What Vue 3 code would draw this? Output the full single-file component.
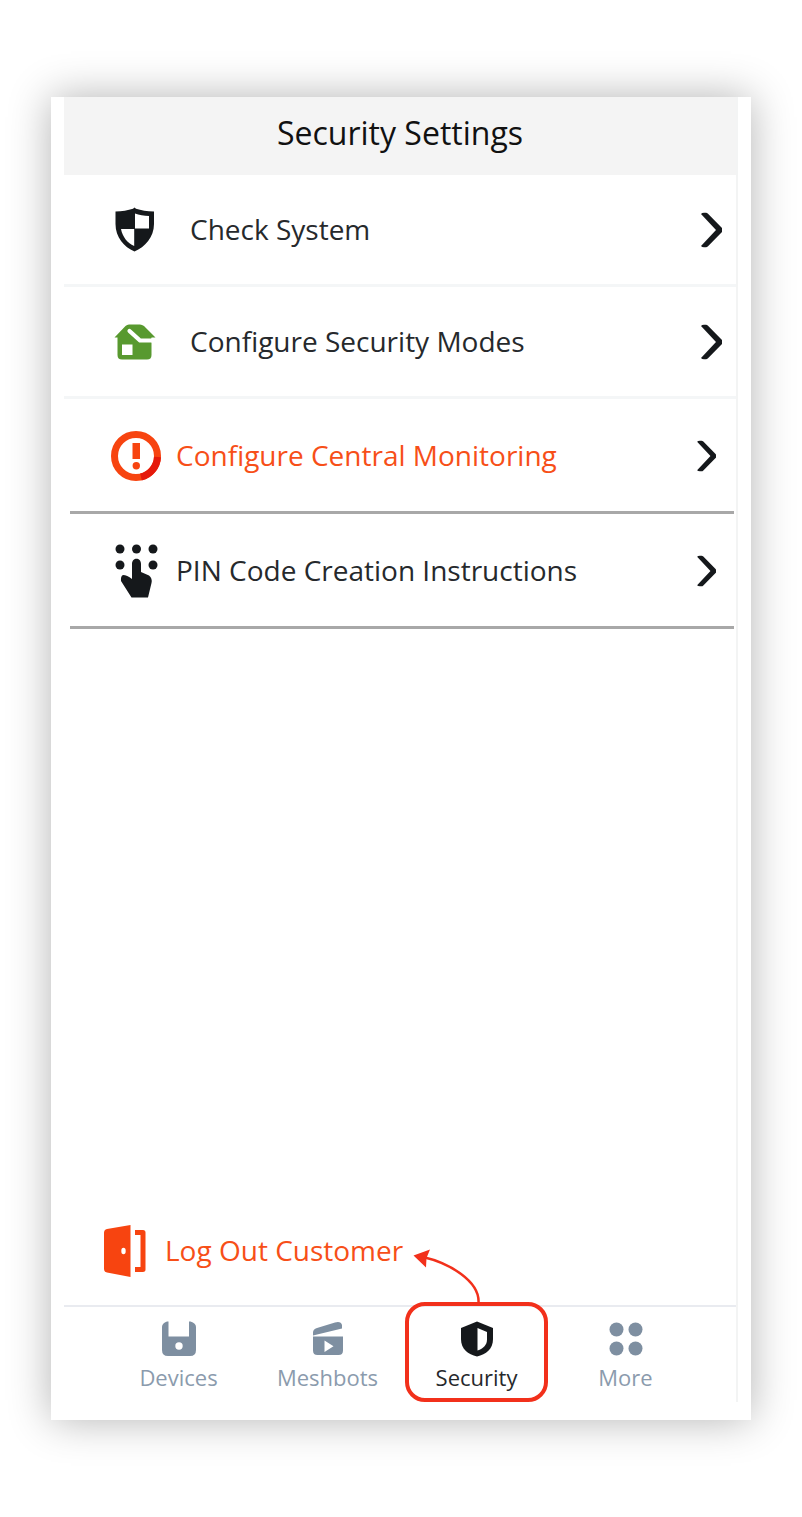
<script setup>
const modes = [
  { label: 'Check System', icon: 'shield' },
  { label: 'Configure Security Modes', icon: 'house' },
]
const services = [
  { label: 'Configure Central Monitoring', icon: 'alert', accent: true },
  { label: 'PIN Code Creation Instructions', icon: 'keypad' },
]
const tabs = ['Devices', 'Meshbots', 'Security', 'More']
</script>

<template>
  <div class="page">
    <div class="card">
      <main class="screen">
        <header class="header">
          <h1>Security Settings</h1>
        </header>

        <nav aria-label="Security settings">
          <a v-for="item in modes" :key="item.label" href="#" class="row mode">
            <svg v-if="item.icon === 'shield'" class="icon" viewBox="0 0 50 50" aria-hidden="true">
              <path fill="#15181b" d="M24.500 2.500L26 3.800C31 5.500 37 6.200 44 6.500V19C44 32 35 42 24.500 46.500C14 42 5.500 32 5.500 19V6.500C12 6.200 18 5.500 23 3.800Z" />
              <path fill="#fff" d="M25 8.500C29 10 34 10.800 39 11V23.500H25ZM24.200 24H11C12.500 32 17.500 38 24.200 41Z" />
            </svg>
            <svg v-else class="icon" viewBox="0 0 50 50" aria-hidden="true">
              <path fill="#58992f" d="M4.500 20.500L15.500 9Q17 7.500 19 7.500H30Q32 7.500 34 9L45.500 20.500H41.500V38Q41.500 42.500 37 42.500H12Q7.500 42.500 7.500 38V20.500Z" />
              <path fill="none" stroke="#fff" stroke-width="4.200" stroke-linecap="round" stroke-linejoin="round" d="M19.500 14L30 23.500H42" />
              <path fill="#fff" d="M12 27.500H22.500V38H12ZM41.500 21H46V25.500H41.500Z" />
            </svg>
            <span>{{ item.label }}</span>
            <svg class="chevron" viewBox="0 0 22 36" aria-hidden="true">
              <path d="M1 2Q2 .8 4 .8H6Q7 .8 8 1.800L21.500 15.500Q24 18 21.500 20.500L8 34.200Q7 35.200 6 35.200H4Q2 35.200 1 34L16 18Z" />
            </svg>
          </a>
          <a
            v-for="item in services"
            :key="item.label"
            href="#"
            class="row service"
            :class="{ accent: item.accent }"
          >
            <svg v-if="item.icon === 'alert'" class="icon" viewBox="0 0 50 50" aria-hidden="true">
              <circle cx="25" cy="25" r="21.500" fill="none" stroke="#f74410" stroke-width="7" />
              <path d="M46.500 26A21.500 21.500 0 0 1 30 46" fill="none" stroke="#e5190b" stroke-width="7" />
              <path fill="#f74410" d="M21.500 12H29V28H21.500Z" />
              <circle cx="25.300" cy="34.700" r="3.700" fill="#f74410" />
            </svg>
            <svg v-else class="icon keypad" viewBox="0 0 50 56" aria-hidden="true">
              <g fill="#15181b">
                <circle cx="9" cy="6" r="4.500" />
                <circle cx="25.500" cy="6" r="4.500" />
                <circle cx="42" cy="6" r="4.500" />
                <circle cx="9" cy="22" r="4.500" />
                <circle cx="42" cy="22" r="4.500" />
                <path d="M21 21C21 14 30 14 30 21V29L38 32.500Q41.500 35 40.500 40L37 54.500H20.500L10 38Q9.500 33 12 32Q16 32 21 36Z" />
              </g>
            </svg>
            <span>{{ item.label }}</span>
            <svg class="chevron" viewBox="0 0 22 36" aria-hidden="true">
              <path d="M1 2Q2 .8 4 .8H6Q7 .8 8 1.800L21.500 15.500Q24 18 21.500 20.500L8 34.200Q7 35.200 6 35.200H4Q2 35.200 1 34L16 18Z" />
            </svg>
          </a>
        </nav>

        <button type="button" class="logout">
          <svg viewBox="0 0 44 54" aria-hidden="true">
            <path fill="#f74410" d="M4 5L27.500 1V53L4 48.500Q1 48 1 45V9Q1 5.500 4 5Z" />
            <path fill="none" stroke="#f74410" stroke-width="5" stroke-linejoin="round" d="M32 8.500H40V45.500H32" />
            <ellipse cx="20.500" cy="27" rx="2.200" ry="3.200" fill="#fff" />
          </svg>
          <span>Log Out Customer</span>
        </button>

        <nav class="tabs" aria-label="Main">
          <a v-for="tab in tabs" :key="tab" href="#" class="tab" :class="{ active: tab === 'Security' }">
            <svg v-if="tab === 'Security'" class="pointer" viewBox="0 0 80 60" aria-hidden="true">
              <path d="M16 11C42 17 73 35 71.500 57" fill="none" stroke="#f2301b" stroke-width="2.500" />
              <path d="M6.500 9.500L23 3.500L19.500 12L19 21.500Z" fill="#f2301b" />
            </svg>
            <svg class="tab-icon" viewBox="0 0 36 36" aria-hidden="true">
              <g v-if="tab === 'Devices'">
                <path fill="#7e8fa1" d="M1 6Q1 2 6 .5H7.500V15.500H28V.5H29.500Q35 2 35 6V29Q35 35 29 35H7Q1 35 1 29Z" />
                <circle cx="18" cy="25" r="3.700" fill="#fff" />
              </g>
              <g v-else-if="tab === 'Meshbots'" fill="#7e8fa1">
                <path fill-rule="evenodd" d="M3 15.500H33V29.500Q33 34 28.500 34H7.500Q3 34 3 29.500ZM14.500 19.500V31L23.500 25.200Z" />
                <path d="M3 14.500V11.500Q3 8 7 7L25 1.500Q31 0 32 4V7.500Z" />
              </g>
              <g v-else-if="tab === 'Security'">
                <path fill="#15181b" d="M18 .5L34 7V18C34 28 27 33.500 18 35.500C9 33.500 2 28 2 18V7Z" />
                <path fill="#fff" d="M18.500 7L28 11V18.500C28 24 24.500 27.500 18.500 29.500Z" />
              </g>
              <g v-else fill="#7e8fa1">
                <circle cx="8.500" cy="8.500" r="7" />
                <circle cx="27.500" cy="8.500" r="7" />
                <circle cx="8.500" cy="27.500" r="7" />
                <circle cx="27.500" cy="27.500" r="7" />
              </g>
            </svg>
            <span>{{ tab }}</span>
          </a>
        </nav>
      </main>
    </div>
  </div>
</template>

<style>
body {
  background: #fff;
}
</style>

<style scoped>
.page {
  box-sizing: border-box;
  display: flex;
  min-height: 100vh;
  padding: 97px 51px;
  font-family: "Open Sans", "Noto Sans", sans-serif;
  color: #26292c;
}

.card {
  display: flex;
  flex: 1;
  padding: 0 13px 18px;
  background: #fff;
  box-shadow: 0 0 40px rgba(0, 0, 0, 0.3);
}

.screen {
  display: flex;
  flex: 1;
  flex-direction: column;
  border-right: 2px solid #f3f4f4;
}

.header {
  display: flex;
  justify-content: center;
  height: 78px;
  background: #f4f4f4;
}

h1 {
  margin: 0;
  font-size: 32px;
  font-weight: 400;
  line-height: 72px;
  color: #111;
}

a {
  color: inherit;
  text-decoration: none;
}

.row {
  display: flex;
  align-items: center;
  box-sizing: border-box;
  font-size: 28px;
}

.row span {
  flex: 1;
  padding-bottom: 2px;
}

.icon {
  width: 50px;
  height: 50px;
}

.chevron {
  width: 22px;
  height: 36px;
  fill: #15181b;
}

.mode {
  height: 112px;
  padding: 0 14px 0 46px;
  border-bottom: 3px solid #f4f6f7;
}

.mode .icon {
  margin-right: 30px;
}

.service {
  height: 115px;
  margin: 0 2px 0 6px;
  padding: 2px 18px 0 41px;
  border-bottom: 3px solid #a8a8a8;
}

.service .icon {
  margin-right: 15px;
}

.service .keypad {
  height: 56px;
}

.service .chevron {
  width: 20px;
  height: 32px;
}

.accent span {
  color: #f74f18;
}

.logout {
  display: flex;
  align-items: center;
  align-self: flex-start;
  gap: 18px;
  margin: auto 0 27px 39px;
  padding: 0;
  border: 0;
  background: none;
  font: inherit;
  font-size: 28px;
  line-height: 52px;
  color: #f74f18;
}

.logout span {
  padding-bottom: 2px;
}

.logout svg {
  width: 44px;
  height: 54px;
}

.tabs {
  display: grid;
  grid-template-columns: repeat(4, 1fr);
  padding: 0 36px 0 40px;
  border-top: 2px solid #e9ebf0;
}

.tab {
  position: relative;
  display: flex;
  flex-direction: column;
  align-items: center;
  gap: 5px;
  box-sizing: border-box;
  height: 100px;
  margin: -5px 3px 0;
  padding-top: 15px;
  border: 4px solid transparent;
  border-radius: 20px;
  font-size: 22px;
  line-height: 30px;
  color: #8b9bad;
}

.tab.active {
  border-color: #f2301b;
  color: #26292c;
}

.tab-icon {
  width: 36px;
  height: 36px;
}

.pointer {
  position: absolute;
  bottom: 100%;
  left: -2px;
  width: 80px;
  height: 60px;
}
</style>
